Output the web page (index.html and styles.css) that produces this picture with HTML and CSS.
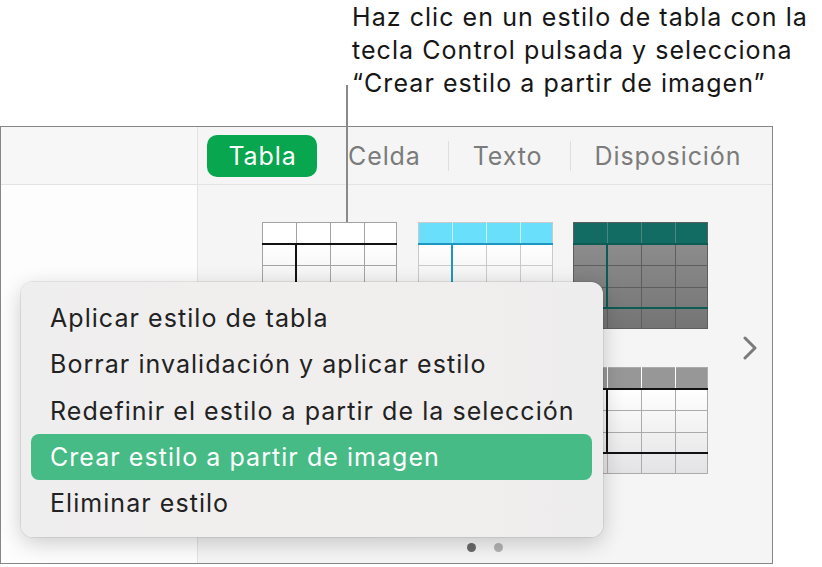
FILE: index.html
```html
<!DOCTYPE html>
<html lang="es">
<head>
<meta charset="utf-8">
<title>Estilos de tabla</title>
<link rel="stylesheet" href="styles.css">
</head>
<body>
<div class="page">
  <p class="callout">Haz clic en un estilo de tabla con la<br>tecla Control pulsada y selecciona<br>“Crear estilo a partir de imagen”</p>

  <div class="window">
    <div class="side-top"></div>
    <div class="toolbar">
      <span class="tab-active">Tabla</span>
      <span class="tab first">Celda</span>
      <span class="sep"></span>
      <span class="tab">Texto</span>
      <span class="sep"></span>
      <span class="tab">Disposición</span>
    </div>
    <div class="side"></div>
    <div class="panel">
      <div class="gallery">
        <div class="thumbs">
          <!-- 1: plain white -->
          <svg class="thumb" viewBox="0 0 135 107" width="135" height="107">
            <defs>
              <linearGradient id="gw1" x1="0" y1="0" x2="0" y2="1">
                <stop offset="0" stop-color="#ffffff"/>
                <stop offset="1" stop-color="#e2e2e4"/>
              </linearGradient>
            </defs>
            <rect x="0" y="0" width="135" height="22" fill="#ffffff"/>
            <rect x="0" y="22" width="135" height="85" fill="url(#gw1)"/>
            <g stroke="#a3a3a3" stroke-width="1">
              <path d="M34.5 0V107M68.5 0V107M102.5 0V107M0 43.5H135M0 65.5H135"/>
              <rect x="0.5" y="0.5" width="134" height="106" fill="none"/>
            </g>
            <g stroke="#111" stroke-width="2">
              <path d="M0 22H135M34 22V87M0 86H135"/>
            </g>
          </svg>
          <!-- 2: cyan header -->
          <svg class="thumb" viewBox="0 0 135 107" width="135" height="107">
            <defs>
              <linearGradient id="gw2" x1="0" y1="0" x2="0" y2="1">
                <stop offset="0" stop-color="#ffffff"/>
                <stop offset="1" stop-color="#e2e2e4"/>
              </linearGradient>
            </defs>
            <rect x="0" y="0" width="135" height="22" fill="#69dffc"/>
            <rect x="0" y="22" width="135" height="85" fill="url(#gw2)"/>
            <g stroke="#c9c9c9" stroke-width="1">
              <path d="M34.5 22V107M68.5 22V107M102.5 22V107M0 43.5H135M0 65.5H135M0 86.5H135"/>
              <rect x="0.5" y="0.5" width="134" height="106" fill="none"/>
            </g>
            <path d="M34.5 0V22M68.5 0V22M102.5 0V22" stroke="#c6f3ff" stroke-width="1"/>
            <g stroke="#1f95c2" stroke-width="2">
              <path d="M0 22H135M34 22V107"/>
            </g>
          </svg>
          <!-- 3: dark teal -->
          <svg class="thumb" viewBox="0 0 135 107" width="135" height="107">
            <defs>
              <linearGradient id="gd3" x1="0" y1="0" x2="0" y2="1">
                <stop offset="0" stop-color="#8c8c8c"/>
                <stop offset="1" stop-color="#747474"/>
              </linearGradient>
            </defs>
            <rect x="0" y="0" width="135" height="22" fill="#126c63"/>
            <rect x="0" y="22" width="135" height="85" fill="url(#gd3)"/>
            <g stroke="#5e5e5e" stroke-width="1">
              <path d="M34.5 22V107M68.5 22V107M102.5 22V107M0 43.5H135M0 65.5H135"/>
              <rect x="0.5" y="0.5" width="134" height="106" fill="none"/>
            </g>
            <path d="M34.5 0V22M68.5 0V22M102.5 0V22" stroke="#4f857f" stroke-width="1"/>
            <g stroke="#0c5b54" stroke-width="2">
              <path d="M0 22H135M34 22V87M0 86H135"/>
            </g>
          </svg>
          <!-- 4 (covered by menu) -->
          <svg class="thumb" viewBox="0 0 135 107" width="135" height="107">
            <rect x="0" y="0" width="135" height="107" fill="#ffffff" stroke="#aaa"/>
          </svg>
          <!-- 5 (covered by menu) -->
          <svg class="thumb" viewBox="0 0 135 107" width="135" height="107">
            <rect x="0" y="0" width="135" height="107" fill="#ffffff" stroke="#aaa"/>
          </svg>
          <!-- 6: gray header -->
          <svg class="thumb" viewBox="0 0 135 107" width="135" height="107">
            <defs>
              <linearGradient id="gw6" x1="0" y1="0" x2="0" y2="1">
                <stop offset="0" stop-color="#ffffff"/>
                <stop offset="1" stop-color="#e3e3e5"/>
              </linearGradient>
            </defs>
            <rect x="0" y="0" width="135" height="22" fill="#979797"/>
            <rect x="0" y="22" width="135" height="85" fill="url(#gw6)"/>
            <g stroke="#ababab" stroke-width="1">
              <path d="M34.5 22V107M68.5 22V107M102.5 22V107M0 43.5H135M0 65.5H135"/>
              <rect x="0.5" y="0.5" width="134" height="106" fill="none"/>
            </g>
            <path d="M34.5 0V22M68.5 0V22M102.5 0V22" stroke="#ffffff" stroke-width="1"/>
            <g stroke="#111" stroke-width="2">
              <path d="M0 22H135M34 22V87M0 86H135"/>
            </g>
          </svg>
        </div>
        <svg class="next" viewBox="0 0 14 24" width="14" height="24">
          <path d="M2 2L12 12L2 22" fill="none" stroke="#7a7a7a" stroke-width="3" stroke-linecap="round" stroke-linejoin="round"/>
        </svg>
      </div>
      <div class="dots">
        <span class="dot on"></span>
        <span class="dot"></span>
      </div>
    </div>
  </div>

  <span class="leader"></span>

  <ul class="menu">
    <li>Aplicar estilo de tabla</li>
    <li>Borrar invalidación y aplicar estilo</li>
    <li>Redefinir el estilo a partir de la selección</li>
    <li class="sel">Crear estilo a partir de imagen</li>
    <li>Eliminar estilo</li>
  </ul>
</div>
</body>
</html>
```

FILE: styles.css
```css
* { box-sizing: border-box; }

html, body {
  margin: 0;
  padding: 0;
  background: #ffffff;
}

body {
  font-family: Inter, "Noto Sans", "Liberation Sans", sans-serif;
  color: #1d1d1f;
}

.page {
  position: relative;
  width: 822px;
  height: 567px;
  overflow: hidden;
}

.callout {
  margin: 0;
  height: 101px;
  padding: 1px 0 0 352px;
  font-size: 25px;
  letter-spacing: 1.05px;
  line-height: 33px;
  color: #161616;
  white-space: nowrap;
}

.window {
  margin-top: 25px;
  width: 773px;
  height: 438px;
  border: 1px solid #868686;
  display: grid;
  grid-template-columns: 197px 1fr;
  grid-template-rows: 58px 1fr;
  background: #f5f5f5;
}

.side-top {
  background: #f7f7f7;
  border-right: 1px solid #e3e3e3;
  border-bottom: 1px solid #e3e3e3;
}

.toolbar {
  background: #f5f5f5;
  border-bottom: 1px solid #e3e3e3;
  display: flex;
  align-items: center;
  padding-left: 9px;
}

.tab-active {
  width: 110px;
  height: 42px;
  border-radius: 10px;
  background: #07a64f;
  color: #ffffff;
  font-size: 25px;
  letter-spacing: 0.9px;
  display: flex;
  align-items: center;
  justify-content: center;
  padding-left: 1px;
}

.tab {
  color: #7b7b7b;
  font-size: 25px;
  letter-spacing: 0.9px;
  padding: 0 27px 0 24px;
}

.tab.first { margin-left: 7px; }

.sep {
  width: 1px;
  height: 30px;
  background: #dedede;
}

.side {
  background: #fdfdfd;
  border-right: 1px solid #e3e3e3;
}

.panel {
  background: #f5f5f5;
  display: flex;
  flex-direction: column;
  padding-top: 37px;
}

.gallery {
  display: flex;
  align-items: center;
  padding-left: 64px;
}

.thumbs {
  display: grid;
  grid-template-columns: repeat(3, 135px);
  grid-auto-rows: 107px;
  column-gap: 20.5px;
  row-gap: 38px;
}

.thumb { display: block; }

.next {
  display: block;
  margin-left: 35px;
}

.dots {
  display: flex;
  justify-content: center;
  gap: 18px;
  margin-top: 69px;
}

.dot {
  width: 9px;
  height: 9px;
  border-radius: 50%;
  background: #b3b3b3;
}

.dot.on { background: #696969; }

.leader {
  position: absolute;
  left: 346px;
  top: 85px;
  width: 2px;
  height: 137px;
  background: #8a8a8a;
}

.menu {
  position: absolute;
  left: 21px;
  top: 282px;
  width: 582px;
  margin: 0;
  padding: 13px 11px 11px 10px;
  list-style: none;
  background: linear-gradient(90deg, #efeeee 0%, #f1efee 60%, #eeeded 100%);
  border-radius: 12px;
  box-shadow: 0 0 0 1px rgba(0, 0, 0, 0.07), 0 6px 22px rgba(0, 0, 0, 0.2);
}

.menu li {
  height: 46.25px;
  line-height: 46px;
  padding-left: 19px;
  border-radius: 8px;
  font-size: 25px;
  letter-spacing: 1.05px;
  color: #222222;
  white-space: nowrap;
}

.menu li.sel {
  background: #46bb85;
  color: #ffffff;
}
```
